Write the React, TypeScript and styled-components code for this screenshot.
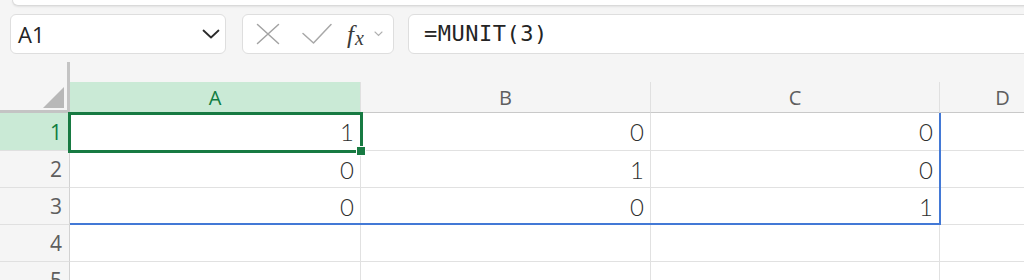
import React from "react";
import styled, { createGlobalStyle } from "styled-components";

const Global = createGlobalStyle`
  html, body { margin: 0; padding: 0; background: #f5f5f5; }
  body { width: 1024px; height: 280px; overflow: hidden; font-family: "Open Sans", "Noto Sans", sans-serif; }
`;

const Page = styled.div`
  width: 1024px;
  height: 280px;
  overflow: hidden;
  background: #f5f5f5;
  display: flex;
  flex-direction: column;
  & > * {
    flex-shrink: 0;
  }
`;

const RibbonEdge = styled.div`
  height: 6px;
  margin-left: 12px;
  margin-right: -20px;
  background: #ffffff;
  border: 1px solid #dadada;
  border-top: none;
  border-radius: 0 0 9px 9px;
  box-shadow: 0 1px 2px rgba(0, 0, 0, 0.08);
  box-sizing: border-box;
`;

const Toolbar = styled.div`
  display: flex;
  align-items: center;
  margin-top: 8px;
  padding-left: 10px;
  height: 40px;
  margin-right: -20px;
`;

const Box = styled.div<{ $w?: number; $gap?: number }>`
  box-sizing: border-box;
  height: 40px;
  background: #ffffff;
  border: 1px solid #dedede;
  border-radius: 6px;
  display: flex;
  align-items: center;
  flex: ${(p) => (p.$w ? `0 0 ${p.$w}px` : "1 1 auto")};
  margin-right: ${(p) => p.$gap ?? 0}px;
`;

const NameText = styled.span`
  flex: 1;
  padding-left: 7px;
  font-family: "Open Sans", sans-serif;
  font-size: 22px;
  color: #242424;
  line-height: 1;
`;

const Chevron = styled.svg`
  margin-right: 5px;
`;

const IconSlot = styled.div<{ $ml: number }>`
  margin-left: ${(p) => p.$ml}px;
  display: flex;
  align-items: center;
`;

const Fx = styled.span`
  font-family: "Liberation Serif", "DejaVu Serif", serif;
  font-style: italic;
  font-size: 25px;
  color: #3a3a3a;
  line-height: 1;
  margin-left: 15px;
  display: flex;
  align-items: baseline;
  & > i {
    font-style: italic;
  }
  & > sub {
    font-size: 20px;
    vertical-align: baseline;
    position: relative;
    top: 2px;
    margin-left: 1px;
  }
`;

const FormulaText = styled.span`
  padding-left: 15px;
  font-family: "DejaVu Sans Mono", monospace;
  font-size: 22px;
  letter-spacing: 0.5px;
  color: #242424;
  line-height: 1;
`;

const SheetWrap = styled.div`
  position: relative;
  margin-top: 8px;
`;

const Sheet = styled.div`
  display: grid;
  grid-template-columns: 70px 291px 290px 289px 126px;
  grid-template-rows: 20px 31px 38px 37px 37px 37px 37px;
`;

const Corner = styled.div`
  grid-row: 1 / span 2;
  grid-column: 1;
  box-sizing: border-box;
  border-right: 3px solid #c4c4c4;
  border-bottom: 3px solid #c4c4c4;
  display: flex;
  align-items: flex-end;
  justify-content: flex-end;
  padding: 0 3px 2px 0;
`;

const Triangle = styled.div`
  width: 0;
  height: 0;
  border-left: 21px solid transparent;
  border-bottom: 21px solid #b8b8b8;
`;

const Spacer = styled.div`
  grid-row: 1;
`;

const ColHead = styled.div<{ $active?: boolean }>`
  box-sizing: border-box;
  display: flex;
  align-items: center;
  justify-content: center;
  background: ${(p) => (p.$active ? "#caead6" : "#f5f5f5")};
  color: ${(p) => (p.$active ? "#107c41" : "#5e5e5e")};
  border-right: 1px solid #e0e0e0;
  border-bottom: 1px solid #c9c9c9;
  font-family: "Open Sans", sans-serif;
  font-size: 20px;
  padding-top: 1px;
`;

const RowHead = styled.div<{ $active?: boolean }>`
  box-sizing: border-box;
  display: flex;
  align-items: center;
  justify-content: flex-end;
  padding-right: 7px;
  background: ${(p) => (p.$active ? "#caead6" : "#f5f5f5")};
  color: ${(p) => (p.$active ? "#107c41" : "#5e5e5e")};
  border-right: 1px solid #d2d2d2;
  border-bottom: 1px solid #e0e0e0;
  font-family: "Open Sans", sans-serif;
  font-size: 21px;
`;

const Cell = styled.div`
  box-sizing: border-box;
  display: flex;
  align-items: center;
  justify-content: flex-end;
  padding-right: 6px;
  background: #ffffff;
  border-right: 1px solid #e1e1e1;
  border-bottom: 1px solid #e1e1e1;
  font-family: "Lato", "Open Sans", sans-serif;
  font-weight: 300;
  font-size: 24px;
  color: #2e2e2e;
`;

const SpillRange = styled.div`
  position: absolute;
  left: 70px;
  top: 51px;
  width: 871px;
  height: 112px;
  box-sizing: border-box;
  border-right: 2px solid #4379d6;
  border-bottom: 2px solid #4379d6;
  pointer-events: none;
`;

const ActiveCell = styled.div`
  position: absolute;
  left: 68px;
  top: 50px;
  width: 295px;
  height: 41px;
  box-sizing: border-box;
  border: 3px solid #177a42;
  pointer-events: none;
`;

const FillHandle = styled.div`
  position: absolute;
  right: -6px;
  bottom: -6px;
  width: 8px;
  height: 8px;
  background: #177a42;
  border: 1px solid #ffffff;
`;

const cols = ["A", "B", "C", "D"];
const data: (number | null)[][] = [
  [1, 0, 0, null],
  [0, 1, 0, null],
  [0, 0, 1, null],
  [null, null, null, null],
  [null, null, null, null],
];

export default function App() {
  return (
    <>
      <Global />
      <Page>
        <RibbonEdge />
        <Toolbar>
          <Box $w={216} $gap={16}>
            <NameText>A1</NameText>
            <Chevron width="18" height="10" viewBox="0 0 18 10">
              <path d="M1.5 1.5 L9 8.5 L16.5 1.5" fill="none" stroke="#2b2b2b" strokeWidth="1.8" strokeLinecap="round" strokeLinejoin="round" />
            </Chevron>
          </Box>
          <Box $w={152} $gap={14}>
            <IconSlot $ml={13}>
              <svg width="24" height="22" viewBox="0 0 24 22">
                <path d="M1.5 1.5 L22.5 20.5 M22.5 1.5 L1.5 20.5" stroke="#a3a3a3" strokeWidth="1.5" strokeLinecap="round" />
              </svg>
            </IconSlot>
            <IconSlot $ml={22}>
              <svg width="30" height="22" viewBox="0 0 30 22">
                <path d="M1 10.5 L11.5 20 L29 1.5" fill="none" stroke="#a8a8a8" strokeWidth="1.5" strokeLinecap="round" strokeLinejoin="round" />
              </svg>
            </IconSlot>
            <Fx>
              <i>f</i>
              <sub>x</sub>
            </Fx>
            <IconSlot $ml={10}>
              <svg width="9" height="6" viewBox="0 0 9 6">
                <path d="M1 1 L4.5 4.5 L8 1" fill="none" stroke="#b0b0b0" strokeWidth="1.1" strokeLinecap="round" />
              </svg>
            </IconSlot>
          </Box>
          <Box>
            <FormulaText>=MUNIT(3)</FormulaText>
          </Box>
        </Toolbar>
        <SheetWrap>
          <Sheet>
            <Corner>
              <Triangle />
            </Corner>
            {cols.map((c) => (
              <Spacer key={"s" + c} />
            ))}
            {cols.map((c) => (
              <ColHead key={c} $active={c === "A"}>
                {c}
              </ColHead>
            ))}
            {data.map((row, r) => (
              <React.Fragment key={r}>
                <RowHead $active={r === 0}>{r + 1}</RowHead>
                {row.map((v, ci) => (
                  <Cell key={ci}>{v === null ? "" : v}</Cell>
                ))}
              </React.Fragment>
            ))}
          </Sheet>
          <SpillRange />
          <ActiveCell>
            <FillHandle />
          </ActiveCell>
        </SheetWrap>
      </Page>
    </>
  );
}
